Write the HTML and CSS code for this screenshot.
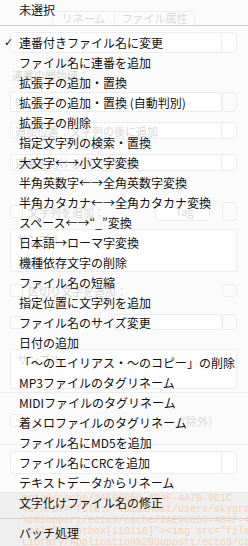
FILE: index.html
```html
<!DOCTYPE html>
<html lang="ja">
<head>
<meta charset="utf-8">
<link rel="stylesheet" href="styles.css">
</head>
<body>
<div class="screen">
  <div class="bg">
    <div class="seg"><span class="seg-a">リネーム</span><span class="seg-b">ファイル属性</span></div>
    <div class="popup p1"><span></span><i class="step"></i></div>
    <div class="label l1">連番の開始値：</div>
    <div class="fieldrow r1"><div class="field">0</div><i class="step"></i></div>
    <div class="popup p2"><span>追加位置：文字列の後に追加</span><i class="step"></i></div>
    <div class="popup p3"><span>連番を付ける順：名前順</span><i class="step"></i></div>
    <div class="checkrow c1"><b class="cb"></b><span class="ct">文字列を追加：</span><div class="field tag">Tag</div><i class="step"></i></div>
    <div class="area a1">サンプル</div>
    <div class="checkrow c2"><b class="cb"></b><span class="ct">区切り文字を追加：</span><i class="step"></i></div>
    <div class="checkrow c3"><b class="cb"></b><div class="field wide"></div><i class="step"></i></div>
    <div class="area a2">サンプル</div>
    <div class="rule r-a"></div>
    <div class="checkrow c4"><b class="cb"></b><span class="ex">（除外）</span></div>
    <div class="rule r-b"></div>
    <div class="popup p4"><span></span><i class="step"></i></div>
    <div class="code">
      <div class="cl">ecto3/cache/2AE96056-484F-4A7B-9E1C</div>
      <div class="cl">&lt;a href="file://localhost/Users/skygrap</div>
      <div class="cl">%20Support/ecto3/cache/2AE96056-484F-4</div>
      <div class="cl"> rel="lightbox[110116]"&gt;&lt;img src="file:</div>
      <div class="cl">Library/Application%20Support/ecto3/ca</div>
    </div>
  </div>
  <div class="menu">
    <div class="item">未選択</div>
    <div class="sep"></div>
    <div class="item"><span class="mark">✓</span>連番付きファイル名に変更</div>
    <div class="item">ファイル名に連番を追加</div>
    <div class="item">拡張子の追加・置換</div>
    <div class="item">拡張子の追加・置換 (自動判別)</div>
    <div class="item">拡張子の削除</div>
    <div class="item">指定文字列の検索・置換</div>
    <div class="item">大文字←→小文字変換</div>
    <div class="item">半角英数字←→全角英数字変換</div>
    <div class="item">半角カタカナ←→全角カタカナ変換</div>
    <div class="item">スペース←→“_”変換</div>
    <div class="item">日本語→ローマ字変換</div>
    <div class="item">機種依存文字の削除</div>
    <div class="item">ファイル名の短縮</div>
    <div class="item">指定位置に文字列を追加</div>
    <div class="item">ファイル名のサイズ変更</div>
    <div class="item">日付の追加</div>
    <div class="item">「〜のエイリアス・〜のコピー」の削除</div>
    <div class="item">MP3ファイルのタグリネーム</div>
    <div class="item">MIDIファイルのタグリネーム</div>
    <div class="item">着メロファイルのタグリネーム</div>
    <div class="item">ファイル名にMD5を追加</div>
    <div class="item">ファイル名にCRCを追加</div>
    <div class="item">テキストデータからリネーム</div>
    <div class="item">文字化けファイル名の修正</div>
    <div class="sep sep2"></div>
    <div class="item">バッチ処理</div>
  </div>
</div>
</body>
</html>
```
FILE: styles.css
```css
html, body {
  margin: 0;
  padding: 0;
  width: 248px;
  height: 546px;
  overflow: hidden;
}
.screen {
  position: relative;
  width: 248px;
  height: 546px;
  overflow: hidden;
  font-family: "Noto Sans CJK JP", sans-serif;
}
.bg {
  height: 546px;
  background: #f0f0f0;
  display: flex;
  flex-direction: column;
  font-size: 11px;
  color: #7a7a7a;
}
.bg > * { flex-shrink: 0; }
.seg {
  margin: 11px 0 0 52px;
  width: 143px;
  height: 15px;
  display: flex;
  border: 1px solid #c2c2c2;
  border-radius: 4px;
  box-sizing: border-box;
  line-height: 13px;
  background: #f6f6f6;
  overflow: hidden;
}
.seg-a { width: 61px; text-align: center; border-right: 1px solid #c2c2c2; }
.seg-b { flex: 1; text-align: center; }
.popup, .fieldrow, .checkrow {
  display: flex;
  align-items: center;
  margin-left: 10px;
  width: 227px;
  box-sizing: border-box;
  overflow: hidden;
  line-height: 14px;
}
.popup {
  border: 1px solid #c4c4c4;
  border-radius: 4px;
  background: #fafafa;
  padding-left: 4px;
}
.popup span { flex: 1; white-space: nowrap; }
.step {
  width: 15px;
  align-self: stretch;
  border-left: 1px solid #c4c4c4;
  margin-left: auto;
  box-sizing: border-box;
}
.p1 { margin-top: 6px; height: 21px; }
.l1 { margin: 16px 0 0 12px; height: 12px; line-height: 12px; overflow: hidden; }
.r1 { margin-top: 11px; height: 20px; }
.r1 .field { flex: 1; height: 20px; }
.r1 .step { border: 1px solid #c4c4c4; border-radius: 4px; margin-left: 0; }
.field {
  border: 1px solid #c4c4c4;
  background: #fdfdfd;
  box-sizing: border-box;
  line-height: 16px;
  padding-left: 4px;
}
.p2 { margin-top: 10px; height: 17px; }
.p3 { margin-top: 15px; height: 17px; }
.cb {
  width: 13px;
  height: 13px;
  border: 1px solid #bbb;
  border-radius: 2px;
  background: #f8f8f8;
  box-sizing: border-box;
  margin-right: 5px;
  flex-shrink: 0;
}
.ct { white-space: nowrap; }
.c1 { margin-top: 31px; height: 19px; }
.tag {
  margin-left: auto;
  width: 55px;
  height: 19px;
  text-align: center;
  border-radius: 4px;
}
.c1 .step, .c2 .step, .c3 .step {
  margin-left: 12px;
  border: 1px solid #c4c4c4;
  border-radius: 4px;
}
.c2 .step { margin-left: auto; }
.area {
  margin: 0 0 0 10px;
  width: 227px;
  box-sizing: border-box;
  border: 1px solid #c8c8c8;
  background: #fcfcfc;
  padding: 2px 0 0 6px;
  line-height: 14px;
  overflow: hidden;
}
.a1 { margin-top: 8px; height: 43px; }
.c2 { margin-top: 12px; height: 13px; }
.c3 { margin-top: 17px; height: 16px; }
.wide { margin-left: auto; width: 108px; height: 16px; }
.c3 .step { margin-left: 0; }
.a2 { margin-top: 19px; height: 40px; }
.rule { height: 1px; background: #c4c4c4; }
.r-a { margin-top: 3px; }
.c4 { margin-top: 21px; height: 13px; }
.ex { margin-left: auto; margin-right: 18px; white-space: nowrap; }
.r-b { margin-top: 17px; }
.p4 { margin-top: 6px; height: 23px; }
.code {
  margin-top: 18px;
  height: 54px;
  box-sizing: border-box;
  background: #cacaca;
  padding-left: 22px;
  border-top: 1px solid #b0b0b0;
  font-family: "Liberation Mono", monospace;
  font-size: 10px;
  line-height: 11px;
  color: #de5a00;
  overflow: hidden;
}
.cl { height: 11px; white-space: pre; }
.menu {
  position: absolute;
  inset: 0;
  background: rgba(255, 255, 255, 0.7);
  display: flex;
  flex-direction: column;
  font-family: "Noto Sans CJK JP", sans-serif;
  font-size: 12px;
  color: #111;
}
.item {
  height: 20px;
  line-height: 20px;
  padding-left: 19px;
  white-space: nowrap;
  display: flex;
  flex-shrink: 0;
}
.mark {
  width: 19px;
  margin-left: -19px;
  padding-left: 4px;
  box-sizing: border-box;
  font-family: "DejaVu Sans", sans-serif;
  font-size: 11px;
}
.sep {
  height: 1px;
  background: #d0d0d0;
  margin: 5px 0 7px;
  flex-shrink: 0;
}
.sep2 { margin: 5px 0 4px; }
```
